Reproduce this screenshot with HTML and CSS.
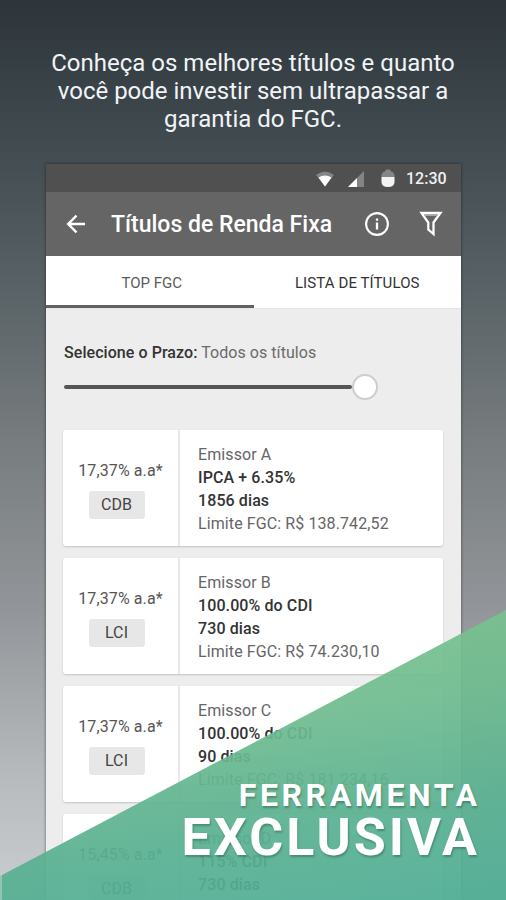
FILE: index.html
```html
<!DOCTYPE html>
<html lang="pt-BR">
<head>
<meta charset="utf-8">
<title>Títulos de Renda Fixa</title>
<link rel="stylesheet" href="styles.css">
</head>
<body>
<main class="promo">
  <h1 class="headline">Conheça os melhores títulos e quanto<br>você pode investir sem ultrapassar a<br>garantia do FGC.</h1>
  <section class="phone">
    <div class="status">
      <svg class="wifi" width="20" height="16" viewBox="0 0 20 16"><path d="M1 4Q10-3 19 4L10 15.500Z" fill="#858585"/><path d="M3.500 6.500Q10 2.500 16.500 6.500L10 15.500Z" fill="#fff"/></svg>
      <svg class="signal" width="17" height="16" viewBox="0 0 17 16"><path d="M0 16L16 0V16Z" fill="#858585"/><path d="M0 16L9 7V16Z" fill="#fff"/></svg>
      <svg class="battery" width="14" height="19" viewBox="0 0 14 19"><path d="M0.500 9V7Q0.500 3 4 2.500L5 0.500H9L10 2.500Q13.500 3 13.500 7V9Z" fill="#858585"/><path d="M0.500 8H13.500V13Q13.500 18 7 18T0.500 13Z" fill="#f3f3f3"/></svg>
      <span class="clock">12:30</span>
    </div>
    <header class="appbar">
      <svg class="back" width="20" height="20" viewBox="0 0 20 20" fill="none" stroke="#fff" stroke-width="2.400"><path d="M19 10H2.500M10.500 1.700L2.200 10L10.500 18.300"/></svg>
      <span class="title">Títulos de Renda Fixa</span>
      <svg class="info" width="26" height="26" viewBox="0 0 26 26"><circle cx="13" cy="13" r="10.900" fill="none" stroke="#fff" stroke-width="2.100"/><path d="M13 11.500V18.500M13 7.500V9.800" stroke="#fff" stroke-width="2.300"/></svg>
      <svg class="filter" width="24" height="26" viewBox="0 0 24 26" fill="none" stroke="#fff" stroke-width="2.300"><path d="M2.500 2H21.500L14.500 11.500V23L9.300 18.500V11.500Z"/><path d="M5 4H19" stroke-width="1.500" stroke="#bbb"/></svg>
    </header>
    <nav class="tabs">
      <span class="tab active">TOP FGC</span>
      <span class="tab list">LISTA DE TÍTULOS</span>
    </nav>
    <div class="content">
      <p class="term"><b>Selecione o Prazo:</b> Todos os títulos</p>
      <div class="slider"><div class="track"></div><div class="knob"></div></div>
      <div class="cards">
        <article class="card">
          <div class="rate"><span>17,37% a.a*</span><span class="chip">CDB</span></div>
          <div class="details"><span>Emissor A</span><b>IPCA + 6.35%</b><b>1856 dias</b><span>Limite FGC: R$ 138.742,52</span></div>
        </article>
        <article class="card">
          <div class="rate"><span>17,37% a.a*</span><span class="chip">LCI</span></div>
          <div class="details"><span>Emissor B</span><b>100.00% do CDI</b><b>730 dias</b><span>Limite FGC: R$ 74.230,10</span></div>
        </article>
        <article class="card">
          <div class="rate"><span>17,37% a.a*</span><span class="chip">LCI</span></div>
          <div class="details"><span>Emissor C</span><b>100.00% do CDI</b><b>90 dias</b><span>Limite FGC: R$ 181.234,16</span></div>
        </article>
        <article class="card">
          <div class="rate"><span>15,45% a.a*</span><span class="chip">CDB</span></div>
          <div class="details"><span>Emissor D</span><b>115% CDI</b><b>730 dias</b></div>
        </article>
      </div>
    </div>
  </section>
  <svg class="wedge" width="506" height="290" viewBox="0 0 506 290">
    <defs><linearGradient id="green" gradientUnits="userSpaceOnUse" x1="390" y1="0" x2="430" y2="290"><stop offset="0" stop-color="#7ac28f"/><stop offset=".3" stop-color="#70bc90"/><stop offset=".65" stop-color="#5bb191"/><stop offset="1" stop-color="#4fad94"/></linearGradient></defs>
    <path d="M2 265L506 0V290H2Z" fill="url(#green)" fill-opacity=".93"/>
    <path d="M0 266L2 265V290H0Z" fill="#92c3b4"/>
  </svg>
  <div class="slogan"><span class="small">FERRAMENTA</span><span class="big">EXCLUSIVA</span></div>
</main>
</body>
</html>
```
FILE: styles.css
```css
* { box-sizing: border-box; }
body { margin: 0; font-family: Roboto, sans-serif; }
.promo {
  position: relative;
  width: 506px;
  height: 900px;
  overflow: hidden;
  background: linear-gradient(#2d353b 0, #444e53 165px, #5b6468 300px, #777c7e 440px, #92969a 610px, #b7bbbd 780px, #cbced0 900px);
}
.headline {
  margin: 0;
  padding-top: 49px;
  height: 164px;
  color: #f1f4f6;
  font-size: 24px;
  font-weight: 400;
  line-height: 28px;
  text-align: center;
  white-space: nowrap;
}
.phone {
  width: 415px;
  height: 736px;
  margin-left: 46px;
  overflow: hidden;
  background: #ededed;
  box-shadow: 0 0 3px rgba(0, 0, 0, .5);
}
.status {
  display: flex;
  align-items: center;
  height: 28px;
  padding-left: 269px;
  background: #505050;
}
.wifi { margin-top: 2px; }
.signal { margin-left: 13px; margin-top: 2px; }
.battery { margin-left: 16px; }
.clock { margin-left: 11px; color: #f0f0f0; font-size: 16px; font-weight: 500; white-space: nowrap; }
.appbar {
  display: flex;
  align-items: center;
  height: 64px;
  padding-left: 20px;
  background: #656565;
}
.title {
  width: 221px;
  margin-left: 25px;
  color: #fff;
  font-size: 23px;
  font-weight: 500;
  white-space: nowrap;
}
.info { margin-left: 32px; }
.filter { margin-left: 29px; }
.tabs { display: flex; height: 53px; background: #fff; border-bottom: 1px solid #e5e5e5; }
.tab {
  width: 207.500px;
  height: 52px;
  padding-top: 2px;
  color: #5b5b5b;
  font-size: 15px;
  line-height: 50px;
  text-align: center;
}
.active { border-bottom: 3px solid #5f6363; padding-left: 4px; }
.list { color: #333; letter-spacing: .1px; }
.content { padding: 33px 18px 0 17px; }
.term { margin: 0 0 0 1px; color: #6a6a6a; font-size: 16px; line-height: 22px; letter-spacing: .06px; white-space: nowrap; }
.term b { color: #333; font-weight: 500; }
.slider { display: flex; align-items: center; height: 26px; margin: 10px 0 30px 1px; }
.track { width: 288px; height: 4px; border-radius: 2px; background: #555; }
.knob { width: 26px; height: 26px; border: 2px solid #cdcdcd; border-radius: 50%; background: #fff; }
.cards { display: flex; flex-direction: column; gap: 12px; }
.card {
  display: flex;
  width: 380px;
  height: 116px;
  background: #fff;
  border-radius: 3px;
  box-shadow: 0 1px 2px rgba(0, 0, 0, .18);
}
.rate {
  display: flex;
  flex-direction: column;
  align-items: center;
  width: 117px;
  padding: 30px 4px 0 0;
  border-right: 2px solid #e8e8e8;
  color: #555;
  font-size: 16px;
  line-height: 22px;
  letter-spacing: .1px;
  white-space: nowrap;
}
.rate > :first-child { margin-left: 4px; }
.chip {
  width: 56px;
  height: 28px;
  margin: 9px 4px 0 0;
  border-radius: 3px;
  background: #e7e7e7;
  color: #444;
  line-height: 28px;
  text-align: center;
}
.details {
  display: flex;
  flex-direction: column;
  padding: 13px 0 0 18px;
  color: #666;
  font-size: 16px;
  line-height: 23px;
  letter-spacing: .1px;
  white-space: nowrap;
}
.details b { color: #333; font-weight: 500; }
.wedge { position: absolute; left: 0; top: 610px; }
.slogan {
  position: absolute;
  right: 29px;
  bottom: 37px;
  display: flex;
  flex-direction: column;
  align-items: flex-end;
  color: #fff;
  font-weight: 700;
  text-shadow: 1px 2px 2px rgba(30, 80, 60, .4);
  white-space: nowrap;
}
.small { font-size: 32px; line-height: 36px; letter-spacing: 3.600px; margin-right: -3.600px; }
.big { font-size: 52px; line-height: 50px; letter-spacing: 3px; margin-right: -3px; }
```
